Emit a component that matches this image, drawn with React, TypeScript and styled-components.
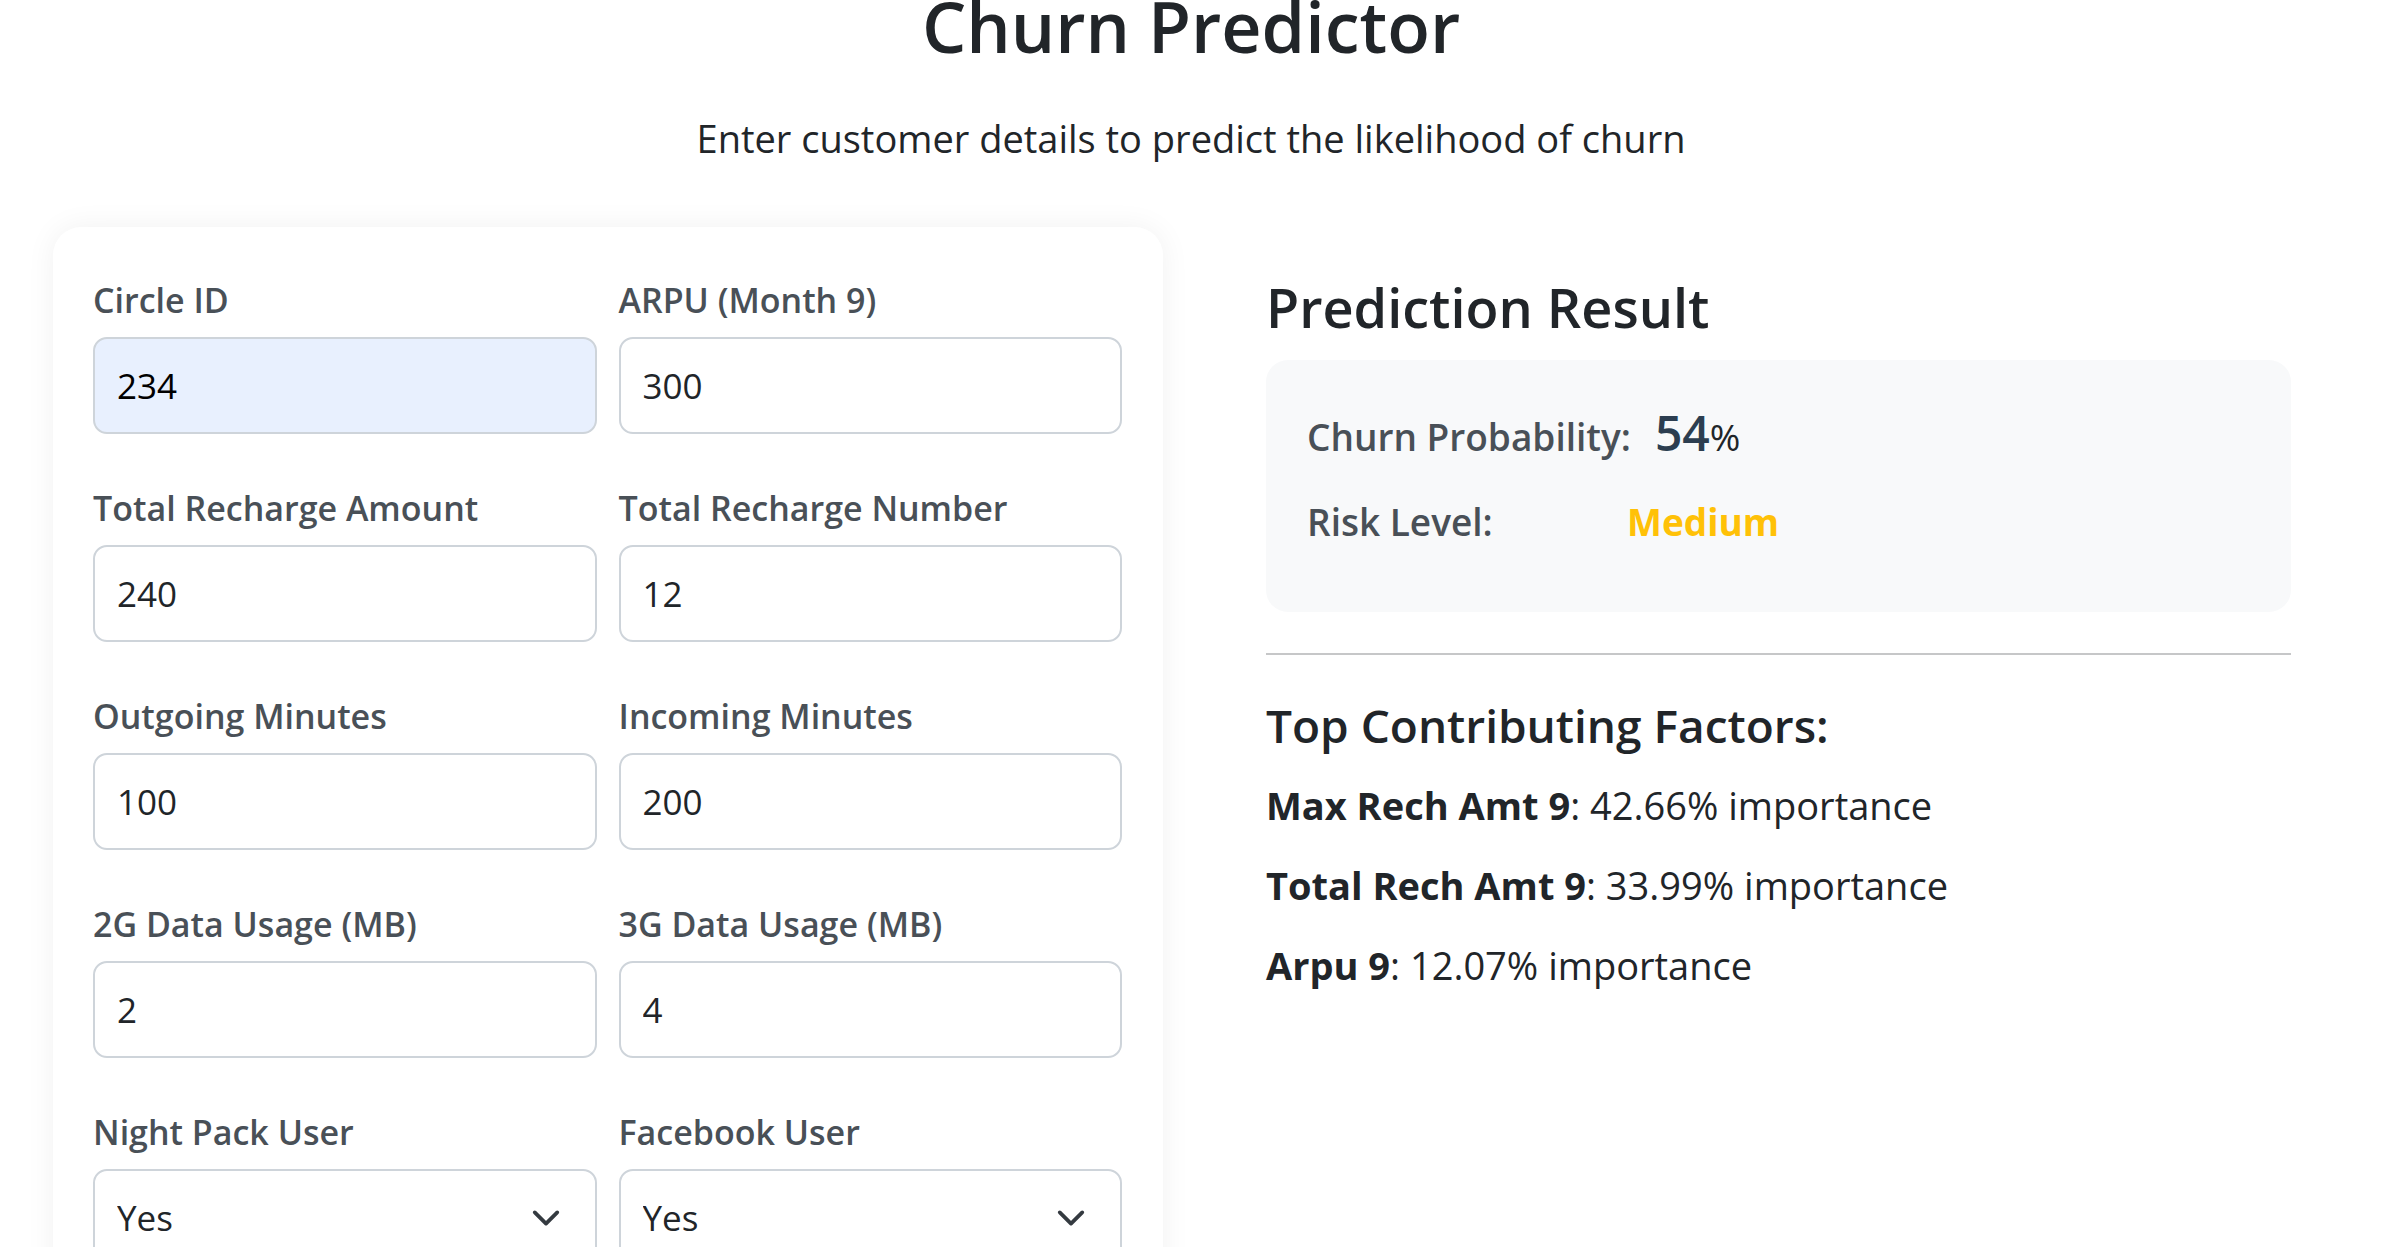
import React from "react";
import styled, { createGlobalStyle } from "styled-components";

const GlobalStyle = createGlobalStyle`
  html, body {
    margin: 0;
    padding: 0;
    overflow: hidden;
    background: #ffffff;
  }
  body {
    font-family: "Open Sans", "Noto Sans", "Liberation Sans", sans-serif;
    color: #212529;
  }
  * {
    box-sizing: border-box;
  }
`;

const Page = styled.div`
  width: 2382px;
  padding: 0 0 0 53px;
`;

const Header = styled.header`
  text-align: center;
  padding-right: 53px;
`;

const Title = styled.h1`
  font-size: 70px;
  line-height: 84px;
  font-weight: 600;
  margin: -16px 0 0 0;
  color: #212529;
`;

const Subtitle = styled.p`
  font-size: 38px;
  line-height: 50px;
  font-weight: 400;
  margin: 45px 0 0 0;
  color: #212529;
`;

const Layout = styled.div`
  display: flex;
  align-items: flex-start;
  gap: 103px;
  margin-top: 64px;
`;

const FormCard = styled.form`
  width: 1110px;
  flex: none;
  background: #ffffff;
  border-radius: 28px;
  box-shadow: 0 0 30px rgba(0, 0, 0, 0.06);
  padding: 49px 41px 60px 40px;
`;

const FieldGrid = styled.div`
  display: grid;
  grid-template-columns: 1fr 1fr;
  column-gap: 22px;
  row-gap: 50px;
`;

const Field = styled.div`
  display: flex;
  flex-direction: column;
`;

const Label = styled.label`
  font-size: 34px;
  line-height: 48px;
  font-weight: 600;
  color: #495057;
  margin-bottom: 13px;
`;

const TextInput = styled.input<{ $autofill?: boolean }>`
  width: 100%;
  height: 97px;
  padding: 0 22px;
  font-family: inherit;
  font-size: 35px;
  color: ${(p) => (p.$autofill ? "#000000" : "#212529")};
  background: ${(p) => (p.$autofill ? "#e8f0fe" : "#ffffff")};
  border: 2px solid #ced4da;
  border-radius: 14px;
  outline: none;
`;

const SelectWrap = styled.div`
  position: relative;
`;

const Select = styled.select`
  width: 100%;
  height: 97px;
  padding: 0 80px 0 22px;
  font-family: inherit;
  font-size: 35px;
  color: #212529;
  background: #ffffff;
  border: 2px solid #ced4da;
  border-radius: 14px;
  appearance: none;
  outline: none;
`;

const Chevron = styled.svg`
  position: absolute;
  right: 36px;
  top: 50%;
  width: 30px;
  height: 30px;
  transform: translateY(-50%);
  pointer-events: none;
`;

const ResultPanel = styled.section`
  width: 1025px;
  flex: none;
  padding-top: 48px;
`;

const PanelTitle = styled.h2`
  font-size: 54px;
  line-height: 64px;
  font-weight: 600;
  margin: 0 0 21px 0;
  color: #212529;
`;

const ResultBox = styled.div`
  background: #f8f9fa;
  border-radius: 22px;
  padding: 49px 41px 33px 41px;
  height: 252px;
`;

const ResultRow = styled.p`
  display: flex;
  align-items: baseline;
  font-size: 37px;
  line-height: 56px;
  margin: 0 0 29px 0;
`;

const ResultLabel = styled.span`
  min-width: 320px;
  padding-right: 24px;
  font-weight: 600;
  color: #495057;
`;

const Probability = styled.span`
  font-size: 48px;
  line-height: 48px;
  font-weight: 600;
  color: #2c3e50;
`;

const Percent = styled.span`
  font-weight: 400;
  color: #212529;
`;

const RiskValue = styled.span<{ $color: string }>`
  font-weight: 700;
  color: ${(p) => p.$color};
`;

const Divider = styled.hr`
  margin: 41px 0 0 0;
  border: none;
  border-top: 2px solid #c6c7c8;
`;

const FactorsTitle = styled.h4`
  font-size: 46px;
  line-height: 54px;
  font-weight: 600;
  margin: 43px 0 0 0;
  color: #212529;
`;

const FactorList = styled.div`
  margin-top: 28px;
  display: flex;
  flex-direction: column;
  gap: 30px;
`;

const FactorItem = styled.p`
  font-size: 38px;
  line-height: 50px;
  margin: 0;
  color: #212529;

  strong {
    font-weight: 700;
  }
`;

type FieldDef = {
  label: string;
  value: string;
  autofill?: boolean;
  select?: boolean;
};

const fields: FieldDef[] = [
  { label: "Circle ID", value: "234", autofill: true },
  { label: "ARPU (Month 9)", value: "300" },
  { label: "Total Recharge Amount", value: "240" },
  { label: "Total Recharge Number", value: "12" },
  { label: "Outgoing Minutes", value: "100" },
  { label: "Incoming Minutes", value: "200" },
  { label: "2G Data Usage (MB)", value: "2" },
  { label: "3G Data Usage (MB)", value: "4" },
  { label: "Night Pack User", value: "Yes", select: true },
  { label: "Facebook User", value: "Yes", select: true },
];

const factors = [
  { name: "Max Rech Amt 9", importance: 42.66 },
  { name: "Total Rech Amt 9", importance: 33.99 },
  { name: "Arpu 9", importance: 12.07 },
];

export default function App() {
  return (
    <>
      <GlobalStyle />
      <Page>
        <Header>
          <Title>Churn Predictor</Title>
          <Subtitle>Enter customer details to predict the likelihood of churn</Subtitle>
        </Header>

        <Layout>
          <FormCard onSubmit={(e) => e.preventDefault()}>
            <FieldGrid>
              {fields.map((f) => (
                <Field key={f.label}>
                  <Label>{f.label}</Label>
                  {f.select ? (
                    <SelectWrap>
                      <Select defaultValue={f.value}>
                        <option value="Yes">Yes</option>
                        <option value="No">No</option>
                      </Select>
                      <Chevron viewBox="0 0 16 16" fill="none">
                        <path
                          d="M2 5l6 6 6-6"
                          stroke="#343a40"
                          strokeWidth="2"
                          strokeLinecap="round"
                          strokeLinejoin="round"
                        />
                      </Chevron>
                    </SelectWrap>
                  ) : (
                    <TextInput type="text" defaultValue={f.value} $autofill={f.autofill} />
                  )}
                </Field>
              ))}
            </FieldGrid>
          </FormCard>

          <ResultPanel>
            <PanelTitle>Prediction Result</PanelTitle>
            <ResultBox>
              <ResultRow>
                <ResultLabel>Churn Probability:</ResultLabel>
                <span>
                  <Probability>54</Probability>
                  <Percent>%</Percent>
                </span>
              </ResultRow>
              <ResultRow>
                <ResultLabel>Risk Level:</ResultLabel>
                <RiskValue $color="#ffc107">Medium</RiskValue>
              </ResultRow>
            </ResultBox>
            <Divider />
            <FactorsTitle>Top Contributing Factors:</FactorsTitle>
            <FactorList>
              {factors.map((f) => (
                <FactorItem key={f.name}>
                  <strong>{f.name}</strong>: {f.importance.toFixed(2)}% importance
                </FactorItem>
              ))}
            </FactorList>
          </ResultPanel>
        </Layout>
      </Page>
    </>
  );
}
